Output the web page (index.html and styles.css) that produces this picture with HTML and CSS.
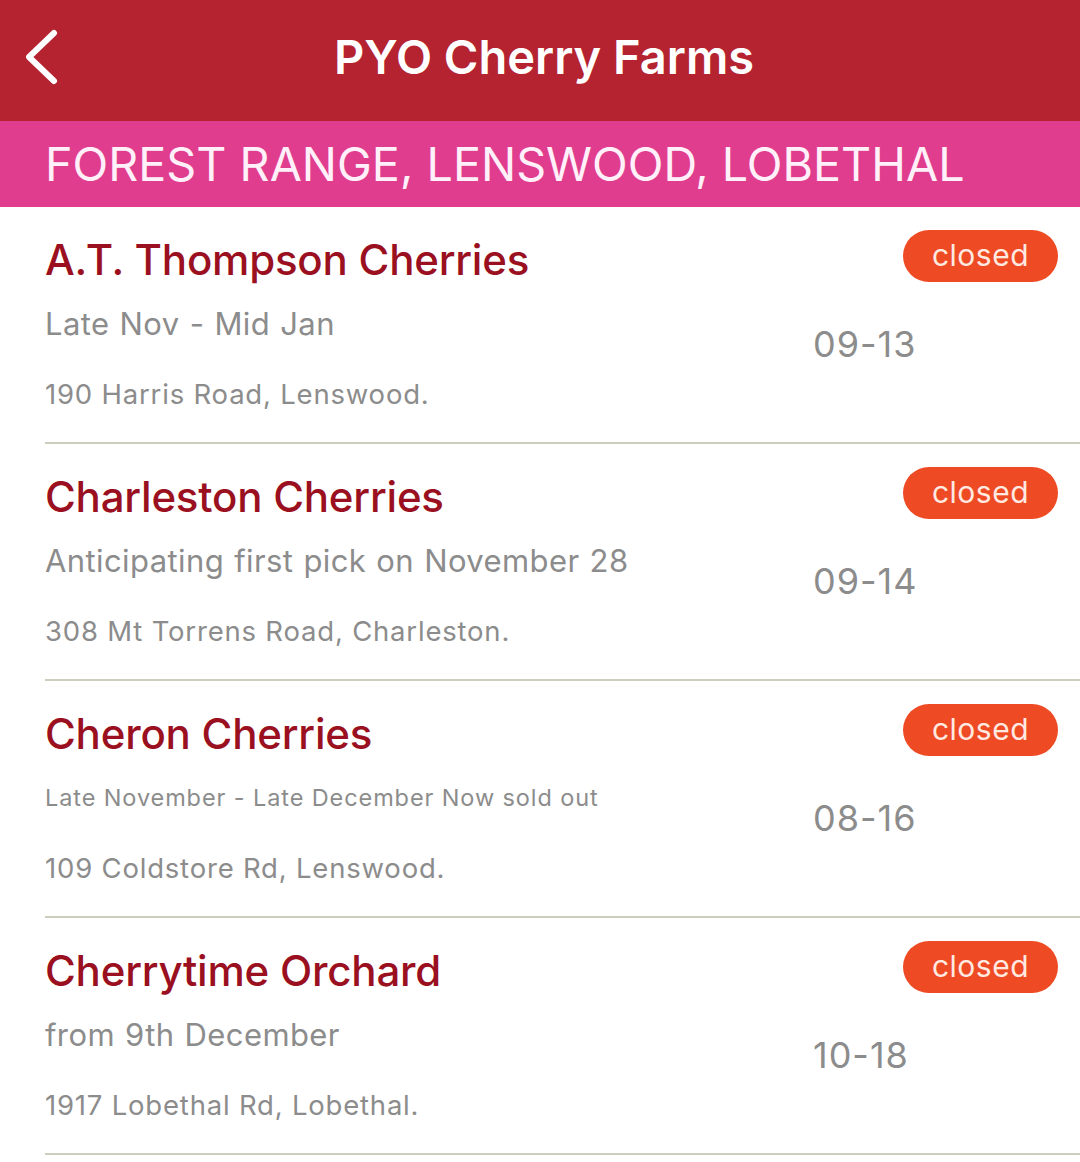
FILE: index.html
```html
<!DOCTYPE html>
<html lang="en">
<head>
<meta charset="utf-8">
<title>PYO Cherry Farms</title>
<link rel="stylesheet" href="styles.css">
</head>
<body>
<div class="app">
  <header class="topbar">
    <button class="back" aria-label="Back">
      <svg width="40" height="60" viewBox="0 0 40 60"><path d="M28 5 L3 29 L28 53" fill="none" stroke="#fff" stroke-width="6" stroke-linecap="round" stroke-linejoin="round"/></svg>
    </button>
    <h1 class="title">PYO Cherry Farms</h1>
  </header>
  <div class="region">FOREST RANGE, LENSWOOD, LOBETHAL</div>
  <ul class="list">
    <li class="row">
      <div class="info">
        <div class="name">A.T. Thompson Cherries</div>
        <div class="season">Late Nov - Mid Jan</div>
        <div class="addr">190 Harris Road, Lenswood.</div>
      </div>
      <div class="side">
        <span class="badge">closed</span>
        <span class="date">09-13</span>
      </div>
    </li>
    <li class="row">
      <div class="info">
        <div class="name">Charleston Cherries</div>
        <div class="season">Anticipating first pick on November 28</div>
        <div class="addr">308 Mt Torrens Road, Charleston.</div>
      </div>
      <div class="side">
        <span class="badge">closed</span>
        <span class="date">09-14</span>
      </div>
    </li>
    <li class="row">
      <div class="info">
        <div class="name">Cheron Cherries</div>
        <div class="season small">Late November - Late December Now sold out</div>
        <div class="addr">109 Coldstore Rd, Lenswood.</div>
      </div>
      <div class="side">
        <span class="badge">closed</span>
        <span class="date">08-16</span>
      </div>
    </li>
    <li class="row">
      <div class="info">
        <div class="name">Cherrytime Orchard</div>
        <div class="season">from 9th December</div>
        <div class="addr">1917 Lobethal Rd, Lobethal.</div>
      </div>
      <div class="side">
        <span class="badge">closed</span>
        <span class="date">10-18</span>
      </div>
    </li>
  </ul>
</div>
</body>
</html>
```

FILE: styles.css
```css
* { box-sizing: border-box; }
html, body { margin: 0; padding: 0; background: #fff; }
body { font-family: Inter, "Liberation Sans", sans-serif; width: 1080px; height: 1162px; overflow: hidden; }

.topbar {
  height: 121px;
  background: #b52330;
  display: flex;
  align-items: center;
  justify-content: center;
  position: relative;
}
.back {
  position: absolute;
  left: 26px;
  top: 28px;
  background: none;
  border: 0;
  padding: 0;
  width: 40px;
  height: 60px;
}
.back svg { display: block; }
.title {
  margin: 0 0 8px 8px;
  color: #fff;
  font-size: 47px;
  font-weight: 600;
  letter-spacing: 0;
}

.region {
  height: 86px;
  background: #e13d8e;
  color: #fff0fa;
  font-size: 46.7px;
  font-weight: 400;
  padding-left: 45px;
  display: flex;
  align-items: center;
  letter-spacing: 0;
}

.list { list-style: none; margin: 0; padding: 0; }
.row {
  height: 237px;
  margin-left: 45px;
  padding-right: 22px;
  display: flex;
  border-bottom: 2px solid #cdcdbd;
}
.info { flex: 1; padding-top: 27px; }
.name {
  color: #9a1020;
  font-size: 42px;
  font-weight: 500;
  line-height: 52px;
  letter-spacing: -0.2px;
}
.season {
  margin-top: 18px;
  color: #8c8c8c;
  font-size: 31px;
  line-height: 40px;
  letter-spacing: 0.4px;
  word-spacing: 1px;
}
.season.small { font-size: 23.5px; letter-spacing: 0.9px; word-spacing: 0; }
.addr {
  margin-top: 34px;
  color: #8c8c8c;
  font-size: 27.5px;
  line-height: 32px;
  letter-spacing: 0.8px;
}
.side {
  width: 245px;
  display: flex;
  flex-direction: column;
  align-items: flex-end;
  padding-top: 23px;
}
.badge {
  width: 155px;
  height: 52px;
  border-radius: 26px;
  background: #ee4a24;
  color: #ffe9e0;
  font-size: 30px;
  display: flex;
  align-items: center;
  justify-content: center;
  padding-bottom: 3px;
  letter-spacing: 0.5px;
}
.date {
  align-self: flex-start;
  margin-top: 40px;
  color: #8c8c8c;
  font-size: 36px;
  line-height: 44px;
  letter-spacing: 1px;
}
```
